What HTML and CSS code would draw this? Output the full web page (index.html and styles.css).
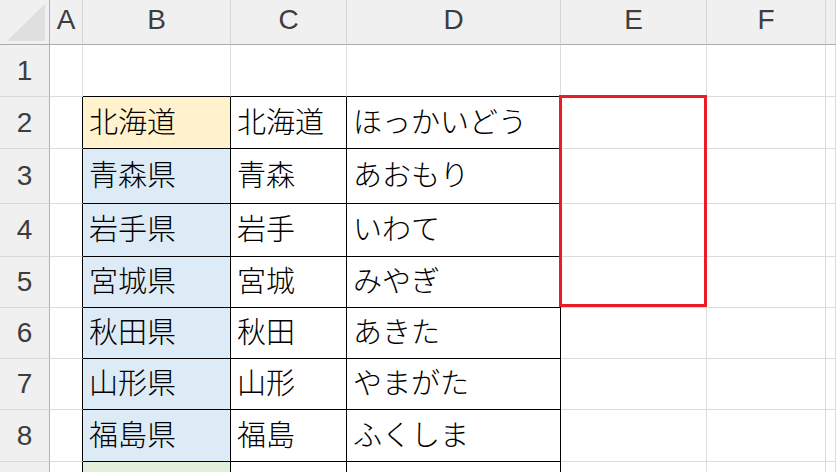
FILE: index.html
```html
<!DOCTYPE html>
<html>
<head>
    <title>Sheet1</title>
    <link rel="stylesheet" href="styles.css">
</head>
<body>
    <div class="sheet">
        <!-- column headers -->
        <div class="corner">
            <svg class="corner-mark" width="49" height="44" viewBox="0 0 49 44">
                <polygon points="45,4 45,41 7,41" fill="#dfdfdf"/>
            </svg>
        </div>
        <div class="ch">A</div>
        <div class="ch">B</div>
        <div class="ch">C</div>
        <div class="ch">D</div>
        <div class="ch">E</div>
        <div class="ch">F</div>
        <div class="ch"></div>

        <!-- row 1 -->
        <div class="rh">1</div>
        <div class="cell"></div>
        <div class="cell edge-b"></div>
        <div class="cell edge-b"></div>
        <div class="cell edge-b"></div>
        <div class="cell"></div>
        <div class="cell"></div>
        <div class="cell"></div>

        <!-- row 2 -->
        <div class="rh">2</div>
        <div class="cell edge-r"></div>
        <div class="cell tb fill-yellow">北海道</div>
        <div class="cell tb">北海道</div>
        <div class="cell tb">ほっかいどう</div>
        <div class="cell pick-anchor"><div class="pick"></div></div>
        <div class="cell"></div>
        <div class="cell"></div>

        <!-- row 3 -->
        <div class="rh">3</div>
        <div class="cell edge-r"></div>
        <div class="cell tb fill-blue">青森県</div>
        <div class="cell tb">青森</div>
        <div class="cell tb">あおもり</div>
        <div class="cell"></div>
        <div class="cell"></div>
        <div class="cell"></div>

        <!-- row 4 -->
        <div class="rh">4</div>
        <div class="cell edge-r"></div>
        <div class="cell tb fill-blue">岩手県</div>
        <div class="cell tb">岩手</div>
        <div class="cell tb">いわて</div>
        <div class="cell"></div>
        <div class="cell"></div>
        <div class="cell"></div>

        <!-- row 5 -->
        <div class="rh">5</div>
        <div class="cell edge-r"></div>
        <div class="cell tb fill-blue">宮城県</div>
        <div class="cell tb">宮城</div>
        <div class="cell tb">みやぎ</div>
        <div class="cell"></div>
        <div class="cell"></div>
        <div class="cell"></div>

        <!-- row 6 -->
        <div class="rh">6</div>
        <div class="cell edge-r"></div>
        <div class="cell tb fill-blue">秋田県</div>
        <div class="cell tb">秋田</div>
        <div class="cell tb">あきた</div>
        <div class="cell"></div>
        <div class="cell"></div>
        <div class="cell"></div>

        <!-- row 7 -->
        <div class="rh">7</div>
        <div class="cell edge-r"></div>
        <div class="cell tb fill-blue">山形県</div>
        <div class="cell tb">山形</div>
        <div class="cell tb">やまがた</div>
        <div class="cell"></div>
        <div class="cell"></div>
        <div class="cell"></div>

        <!-- row 8 -->
        <div class="rh">8</div>
        <div class="cell edge-r"></div>
        <div class="cell tb fill-blue">福島県</div>
        <div class="cell tb">福島</div>
        <div class="cell tb">ふくしま</div>
        <div class="cell"></div>
        <div class="cell"></div>
        <div class="cell"></div>

        <!-- row 9, only its top edge shows -->
        <div class="rh"></div>
        <div class="cell edge-r"></div>
        <div class="cell tb fill-green"></div>
        <div class="cell tb"></div>
        <div class="cell tb"></div>
        <div class="cell"></div>
        <div class="cell"></div>
        <div class="cell"></div>
    </div>
</body>
</html>
```

FILE: styles.css
```css
body {
    margin: 0;
    background-color: #fff;
    overflow: hidden;
}

.sheet {
    display: grid;
    grid-template-columns: 50px 33px 148px 116px 214px 146px 119px 1fr;
    grid-template-rows: 45px 52px 52px 55px 53px 51px 51px 51px 52px 52px;
    width: 836px;
    height: 472px;
    overflow: hidden;
}

.corner {
    background-color: #f0f0f0;
    border-right: 1px solid #b1b1b1;
    border-bottom: 1px solid #ababab;
}

.corner-mark {
    display: block;
}

.ch {
    display: flex;
    align-items: center;
    justify-content: center;
    padding-bottom: 4px;
    background-color: #f0f0f0;
    border-right: 1px solid #d5d5d5;
    border-bottom: 1px solid #ababab;
    font-family: "Liberation Sans", Arial, sans-serif;
    font-size: 28px;
    color: #3d3d3d;
    box-sizing: border-box;
}

.rh {
    display: flex;
    align-items: center;
    justify-content: center;
    background-color: #f0f0f0;
    border-right: 1px solid #b1b1b1;
    border-bottom: 1px solid #d9d9d9;
    font-family: "Liberation Sans", Arial, sans-serif;
    font-size: 28px;
    color: #3d3d3d;
    overflow: hidden;
}

.cell {
    display: flex;
    align-items: center;
    padding-left: 6px;
    padding-bottom: 6px;
    border-right: 1px solid #dcdcdc;
    border-bottom: 1px solid #dcdcdc;
    font-family: "Noto Sans CJK JP", sans-serif;
    font-size: 29px;
    font-weight: 300;
    color: #000;
    white-space: nowrap;
    overflow: hidden;
    min-width: 0;
}

.tb {
    border-right-color: #000;
    border-bottom-color: #000;
}

.edge-r {
    border-right-color: #000;
}

.edge-b {
    border-bottom-color: #000;
}

.fill-yellow {
    background-color: #fff2cc;
}

.fill-blue {
    background-color: #ddebf7;
}

.fill-green {
    background-color: #e2efda;
}

.pick-anchor {
    position: relative;
    overflow: visible;
}

.pick {
    position: absolute;
    top: -2px;
    left: -2px;
    width: 148px;
    height: 212px;
    border: 3px solid #ec1c24;
    box-sizing: border-box;
}
```
